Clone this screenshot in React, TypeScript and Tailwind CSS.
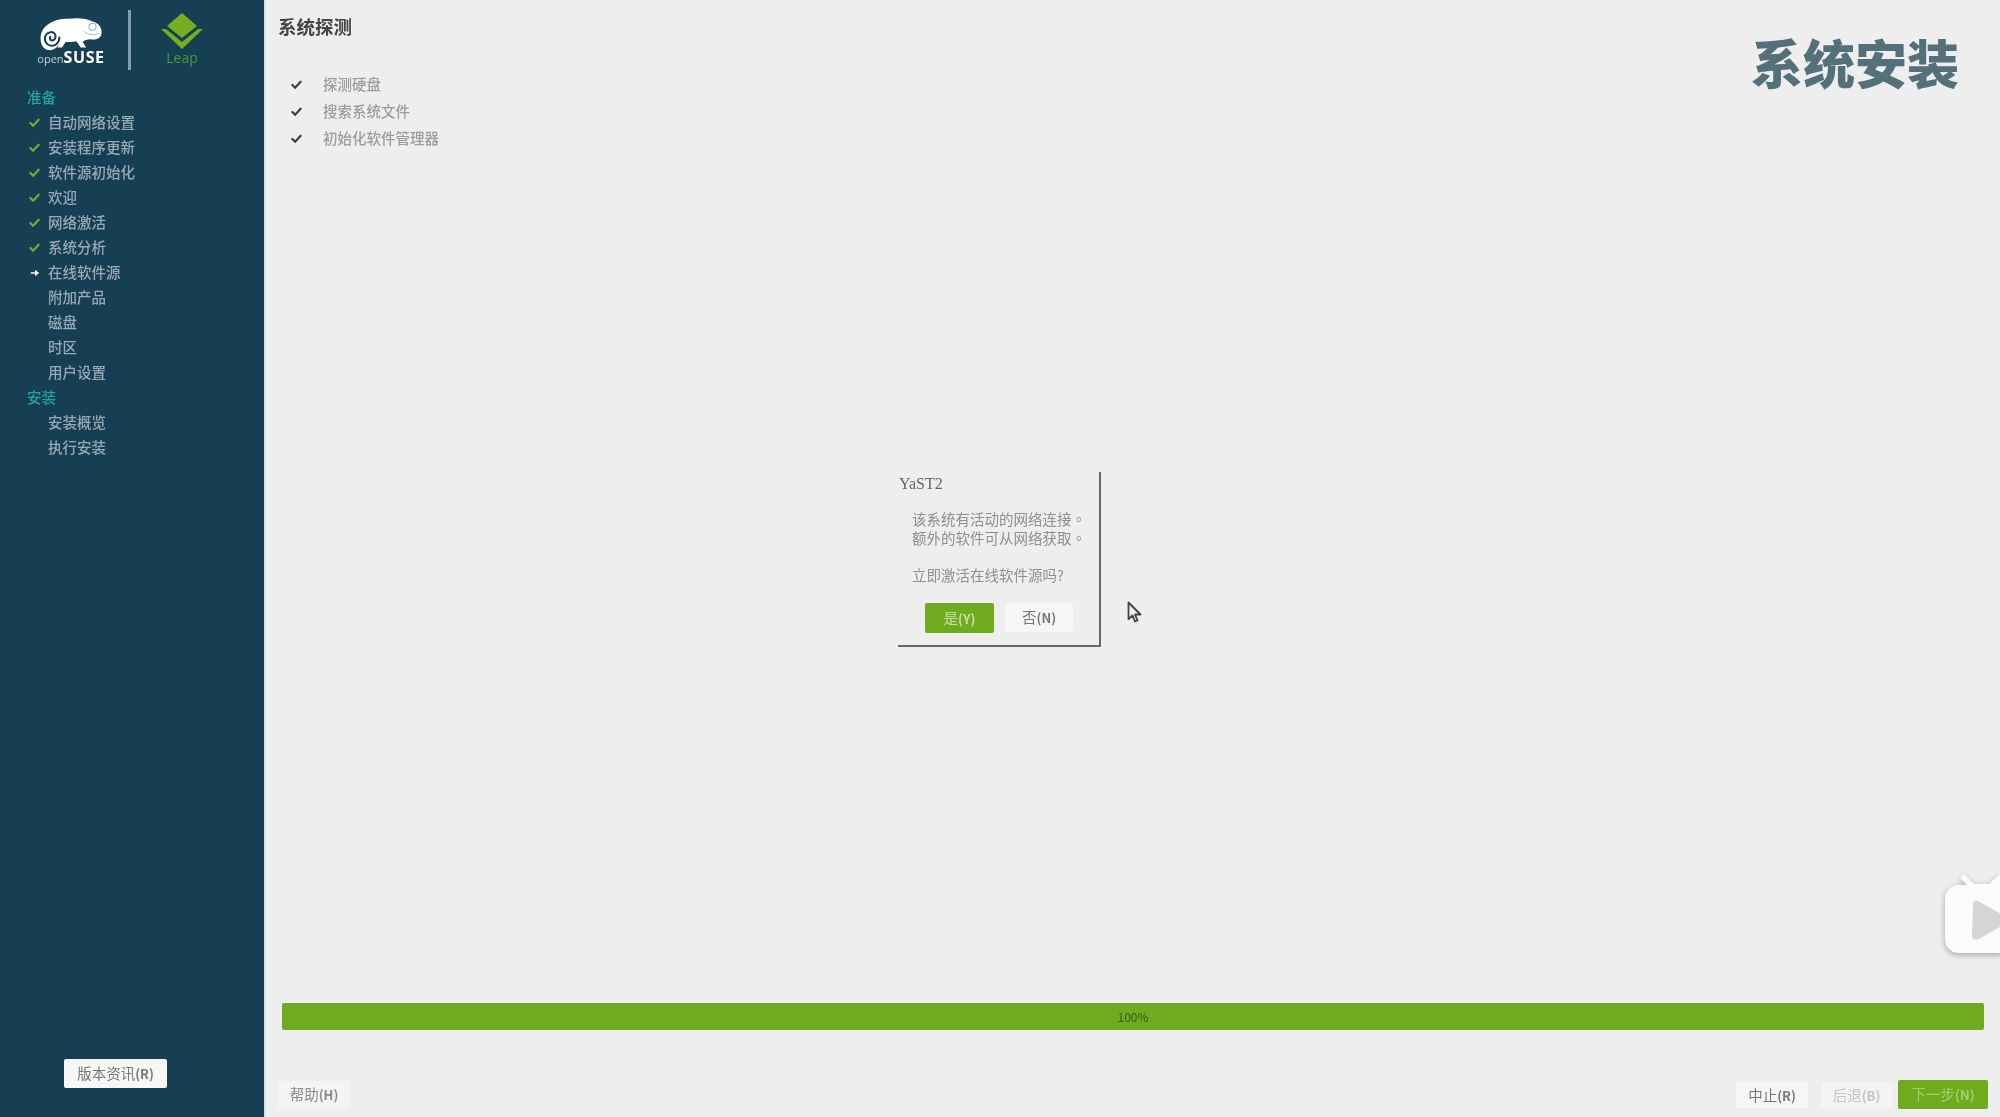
import React from "react";

const font = { fontFamily: '"Noto Sans CJK SC", "Noto Sans", sans-serif' };

function Check({ className }: { className: string }) {
  return (
    <svg viewBox="0 0 12 12" className={className} fill="none" stroke="currentColor" strokeWidth="2.4" strokeLinecap="round">
      <path d="M1.5 6.5 L4.5 9.5 L10.5 3" />
    </svg>
  );
}

function StepRow({ label, state }: { label: string; state: "done" | "current" | "todo" }) {
  return (
    <div className="flex h-[25px] items-center">
      <span className="flex w-[48px] justify-end pr-[8px]">
        {state === "done" && <Check className="h-[11px] w-[11px] text-[#6fb02c]" />}
        {state === "current" && (
          <svg viewBox="0 0 12 12" className="h-[10px] w-[10px] text-white" fill="currentColor">
            <path d="M1 5 H6 V2 L11 6 L6 10 V7 H1 Z" />
          </svg>
        )}
      </span>
      <span className="text-[14.5px] font-medium leading-none text-[#98aab3]">{label}</span>
    </div>
  );
}

function SectionRow({ label }: { label: string }) {
  return (
    <div className="flex h-[25px] items-center pl-[27px] text-[14.5px] font-medium leading-none text-[#22a39b]">{label}</div>
  );
}

function Btn({ label, hot, className }: { label: string; hot: string; className: string }) {
  return (
    <div className={`flex items-center justify-center text-[14.5px] leading-none ${className}`}>
      {label}
      <span className="text-[13px] font-bold">({hot})</span>
    </div>
  );
}

function Logo() {
  return (
    <div className="flex h-[80px] items-start pl-[34px] pt-[10px]">
      <div className="flex w-[74px] flex-col items-center pt-[7px]">
        <svg viewBox="0 0 72 38" className="h-[34px] w-[66px]">
          <path
            d="M2 24 C2 10 16 2 32 2 C44 1 52 1 60 5 C68 7 71 13 70 19 C69 24 64 26 58 25 C54 25 51 26 49 28 L53 34 L47 34 L42 27 C38 28 33 28 30 28 L26 34 L21 34 L23 28 C22 34 16 38 11 37 C5 36 2 31 2 24 Z"
            fill="#ffffff"
          />
          <path
            d="M23 23 C23 29 18 33 13 32 C8 31 6 26 7 22 C9 17 15 15 18 19 C20 22 18 27 14 26 C12 25 12 23 13 22"
            fill="none"
            stroke="#173f54"
            strokeWidth="2.2"
            strokeLinecap="round"
          />
          <circle cx="60" cy="11" r="4" fill="none" stroke="#9fb0b8" strokeWidth="1.2" />
          <path d="M50 15 C54 20 62 21 68 18" fill="none" stroke="#9fb0b8" strokeWidth="1" />
        </svg>
        <div className="-mt-[2px] flex items-baseline leading-none" style={{ fontFamily: '"Open Sans", sans-serif' }}>
          <span className="text-[11px] text-[#c9d3d8]">open</span>
          <span className="text-[16px] font-bold tracking-[0.6px] text-white">SUSE</span>
        </div>
      </div>
      <div className="ml-[20px] h-[60px] w-[3px] bg-[#7f9fae]" />
      <div className="ml-[29px] flex w-[44px] flex-col items-center pt-[3px]">
        <svg viewBox="0 0 42 36" className="h-[36px] w-[42px]">
          <path d="M21 0 L36 13 L21 25 L6 13 Z" fill="#76ae1f" />
          <path d="M0 16 L5 16 L21 29 L37 16 L42 16 L21 36 Z" fill="#76ae1f" />
        </svg>
        <span className="mt-[2px] text-[14px] leading-none text-[#4f9a35]" style={{ fontFamily: '"Open Sans", sans-serif' }}>
          Leap
        </span>
      </div>
    </div>
  );
}

export default function App() {
  return (
    <div className="relative flex h-[1117px] w-[2000px] overflow-hidden bg-[#eeeeee] blur-[0.6px]" style={font}>
      <aside className="flex w-[266px] shrink-0 flex-col border-r-[2px] border-[#d4e0e6] bg-[#173f54]">
        <Logo />
        <div className="flex-1 pt-[5px]">
          <SectionRow label="准备" />
          <StepRow label="自动网络设置" state="done" />
          <StepRow label="安装程序更新" state="done" />
          <StepRow label="软件源初始化" state="done" />
          <StepRow label="欢迎" state="done" />
          <StepRow label="网络激活" state="done" />
          <StepRow label="系统分析" state="done" />
          <StepRow label="在线软件源" state="current" />
          <StepRow label="附加产品" state="todo" />
          <StepRow label="磁盘" state="todo" />
          <StepRow label="时区" state="todo" />
          <StepRow label="用户设置" state="todo" />
          <SectionRow label="安装" />
          <StepRow label="安装概览" state="todo" />
          <StepRow label="执行安装" state="todo" />
        </div>
        <div className="flex pb-[29px] pl-[64px]">
          <Btn label="版本资讯" hot="R" className="h-[29px] w-[103px] rounded-[2px] bg-[#f7f7f7] text-[#777777]" />
        </div>
      </aside>

      <main className="flex min-w-0 flex-1 flex-col">
        <header className="flex h-[130px] items-start justify-between">
          <h1 className="pl-[12px] pt-[17px] text-[18.5px] font-bold leading-none text-[#444444]">系统探测</h1>
          <div className="pr-[41px] pt-[36px] text-[52px] font-black leading-none text-[#54707a]">系统安装</div>
        </header>

        <div className="-mt-[59px] flex flex-1 flex-col pl-[22px]">
          {["探测硬盘", "搜索系统文件", "初始化软件管理器"].map((t) => (
            <div key={t} className="flex h-[27px] items-center">
              <span className="flex w-[35px] pl-[3px]">
                <Check className="h-[11px] w-[11px] text-[#3d3d3d]" />
              </span>
              <span className="text-[14.5px] font-medium leading-none text-[#9c9c9c]">{t}</span>
            </div>
          ))}
        </div>

        <div className="pl-[16px] pr-[16px]">
          <div className="flex h-[27px] items-center justify-center rounded-[2px] bg-[#6fab1f] text-[12px] leading-none text-[#3c5a1b]">
            100%
          </div>
        </div>

        <footer className="flex h-[87px] items-start justify-between pl-[12px] pr-[12px] pt-[50px]">
          <Btn label="帮助" hot="H" className="mt-[1px] h-[27px] w-[72px] rounded-[2px] bg-[#f4f4f4] text-[#8a8a8a]" />
          <div className="flex items-start">
            <Btn label="中止" hot="R" className="mt-[2px] h-[26px] w-[72px] rounded-[2px] bg-[#f6f6f6] text-[#777777]" />
            <Btn label="后退" hot="B" className="ml-[13px] mt-[2px] h-[26px] w-[71px] rounded-[2px] bg-[#f4f4f4] text-[#c4c4c4]" />
            <Btn label="下一步" hot="N" className="ml-[6px] h-[29px] w-[90px] rounded-[2px] bg-[#6fab1f] text-[#a6cf75]" />
          </div>
        </footer>
      </main>

      {/* Dialog floating over the content */}
      <div className="absolute left-[898px] top-[472px] h-[175px] w-[203px] border-b-[2px] border-r-[2px] border-[#66696c] bg-[#eeeeee]">
        <div className="pl-[1px] pt-[2px] text-[16px] leading-[20px] text-[#666666]" style={{ fontFamily: '"Liberation Serif", serif' }}>
          YaST2
        </div>
        <div className="pl-[14px] pt-[15px] text-[14.5px] leading-[19px] text-[#8f8f8f]" style={{ fontFamily: '"Noto Sans CJK TC", "Noto Sans CJK SC", sans-serif' }}>
          <div>该系统有活动的网络连接。</div>
          <div>额外的软件可从网络获取。</div>
          <div className="pt-[18px]">立即激活在线软件源吗?</div>
        </div>
        <div className="flex pl-[27px] pt-[19px]">
          <Btn label="是" hot="Y" className="h-[30px] w-[69px] rounded-[2px] bg-[#6fab1f] text-[#c9e0a8]" />
          <Btn label="否" hot="N" className="ml-[11px] h-[29px] w-[68px] rounded-[2px] bg-[#f6f6f6] text-[#777777]" />
        </div>
      </div>

      {/* Mouse pointer */}
      <svg viewBox="0 0 16 24" className="absolute left-[1127px] top-[601px] h-[24px] w-[16px]">
        <path d="M1.5 1.5 V18 L5.5 14.5 L8 20.5 L10.5 19.5 L8 13.5 L13.5 13.5 Z" fill="#eeeeee" stroke="#3f4346" strokeWidth="1.8" strokeLinejoin="round" />
      </svg>

      {/* Video watermark */}
      <svg viewBox="0 0 60 84" className="absolute left-[1943px] top-[875px] h-[84px] w-[60px] drop-shadow-[0_2px_3px_rgba(0,0,0,0.3)]">
        <path d="M24 10 L18 4 a3 3 0 0 1 5 -3 L31 9 L46 9 L56 0 L60 0 L60 78 L16 78 C8 78 2 72 2 64 L2 24 C2 16 8 10 16 10 Z" fill="#fbfbfb" />
        <path d="M30 29 C30 26 32 25 35 26 L60 40 L60 50 L36 64 C32 66 29 64 29 61 Z" fill="#d5d5d5" />
      </svg>
    </div>
  );
}
